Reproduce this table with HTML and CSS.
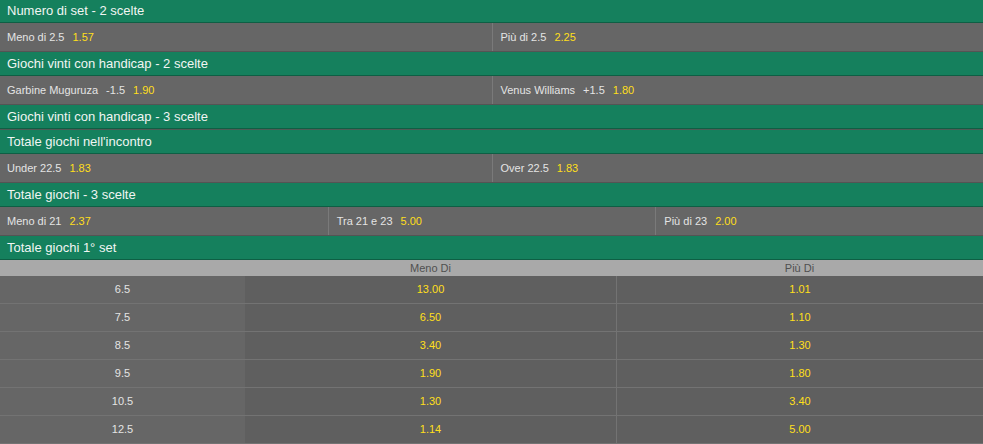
FILE: index.html
```html
<!DOCTYPE html>
<html lang="it">
<head>
<meta charset="utf-8">
<title>Tennis mercati</title>
<link rel="stylesheet" href="styles.css">
</head>
<body>
<div class="markets">
  <section class="market">
    <div class="mhead mhead--first">Numero di set - 2 scelte</div>
    <div class="row row--2">
      <div class="cell"><span class="lbl">Meno di 2.5</span><span class="odd">1.57</span></div>
      <div class="cell"><span class="lbl">Più di 2.5</span><span class="odd">2.25</span></div>
    </div>
  </section>
  <section class="market">
    <div class="mhead">Giochi vinti con handicap - 2 scelte</div>
    <div class="row row--2">
      <div class="cell"><span class="lbl">Garbine Muguruza</span><span class="hcp">-1.5</span><span class="odd">1.90</span></div>
      <div class="cell"><span class="lbl">Venus Williams</span><span class="hcp">+1.5</span><span class="odd">1.80</span></div>
    </div>
  </section>
  <section class="market market--closed">
    <div class="mhead">Giochi vinti con handicap - 3 scelte</div>
  </section>
  <section class="market">
    <div class="mhead">Totale giochi nell'incontro</div>
    <div class="row row--2">
      <div class="cell"><span class="lbl">Under 22.5</span><span class="odd">1.83</span></div>
      <div class="cell"><span class="lbl">Over 22.5</span><span class="odd">1.83</span></div>
    </div>
  </section>
  <section class="market">
    <div class="mhead">Totale giochi - 3 scelte</div>
    <div class="row row--3">
      <div class="cell"><span class="lbl">Meno di 21</span><span class="odd">2.37</span></div>
      <div class="cell"><span class="lbl">Tra 21 e 23</span><span class="odd">5.00</span></div>
      <div class="cell"><span class="lbl">Più di 23</span><span class="odd">2.00</span></div>
    </div>
  </section>
  <section class="market">
    <div class="mhead">Totale giochi 1° set</div>
    <div class="tbl">
      <div class="th"></div>
      <div class="th">Meno Di</div>
      <div class="th">Più Di</div>

      <div class="td td--line">6.5</div>
      <div class="td td--odd">13.00</div>
      <div class="td td--odd td--last">1.01</div>

      <div class="td td--line">7.5</div>
      <div class="td td--odd">6.50</div>
      <div class="td td--odd td--last">1.10</div>

      <div class="td td--line">8.5</div>
      <div class="td td--odd">3.40</div>
      <div class="td td--odd td--last">1.30</div>

      <div class="td td--line">9.5</div>
      <div class="td td--odd">1.90</div>
      <div class="td td--odd td--last">1.80</div>

      <div class="td td--line">10.5</div>
      <div class="td td--odd">1.30</div>
      <div class="td td--odd td--last">3.40</div>

      <div class="td td--line">12.5</div>
      <div class="td td--odd">1.14</div>
      <div class="td td--odd td--last">5.00</div>
    </div>
  </section>
</div>
</body>
</html>
```
FILE: styles.css
```css
html, body {
  margin: 0;
  padding: 0;
  background: #5f5f5f;
}
body {
  font-family: Tahoma, "Liberation Sans", Arial, sans-serif;
  color: #e2e2e2;
}
.markets {
  display: flex;
  flex-direction: column;
}
.market--closed {
  border-bottom: 1px solid #4f5a55;
}
.mhead {
  height: 23px;
  line-height: 23px;
  padding-left: 7px;
  background: #15805d;
  border-bottom: 1px solid #0e5f44;
  color: #f1f5f3;
  font-size: 13px;
  white-space: nowrap;
}
.mhead--first {
  height: 22px;
  line-height: 22px;
}
.row {
  display: grid;
  height: 28px;
  background: #666666;
  border-bottom: 1px solid #545454;
}
.row--2 { grid-template-columns: 1fr 1fr; }
.row--3 { grid-template-columns: 1fr 1fr 1fr; }
.cell {
  display: flex;
  align-items: center;
  padding-left: 8px;
  font-size: 11px;
  white-space: nowrap;
}
.cell:first-child {
  padding-left: 7px;
}
.cell + .cell {
  border-left: 1px solid #7a7a7a;
}
.lbl { color: #e4e4e4; }
.hcp { color: #e4e4e4; margin-left: 8px; }
.odd { color: #ffdf1b; margin-left: 8px; }

.tbl {
  display: grid;
  grid-template-columns: 245fr 371fr 367fr;
}
.th {
  height: 16px;
  line-height: 16px;
  background: #a9a9a9;
  color: #505050;
  font-size: 11px;
  text-align: center;
}
.td {
  height: 27px;
  line-height: 27px;
  border-bottom: 1px solid #737373;
  font-size: 11px;
  text-align: center;
}
.td--line {
  background: #666666;
  color: #e4e4e4;
}
.td--odd {
  background: #5f5f5f;
  color: #ffdf1b;
}
.td--last {
  border-left: 1px solid #737373;
}
```
